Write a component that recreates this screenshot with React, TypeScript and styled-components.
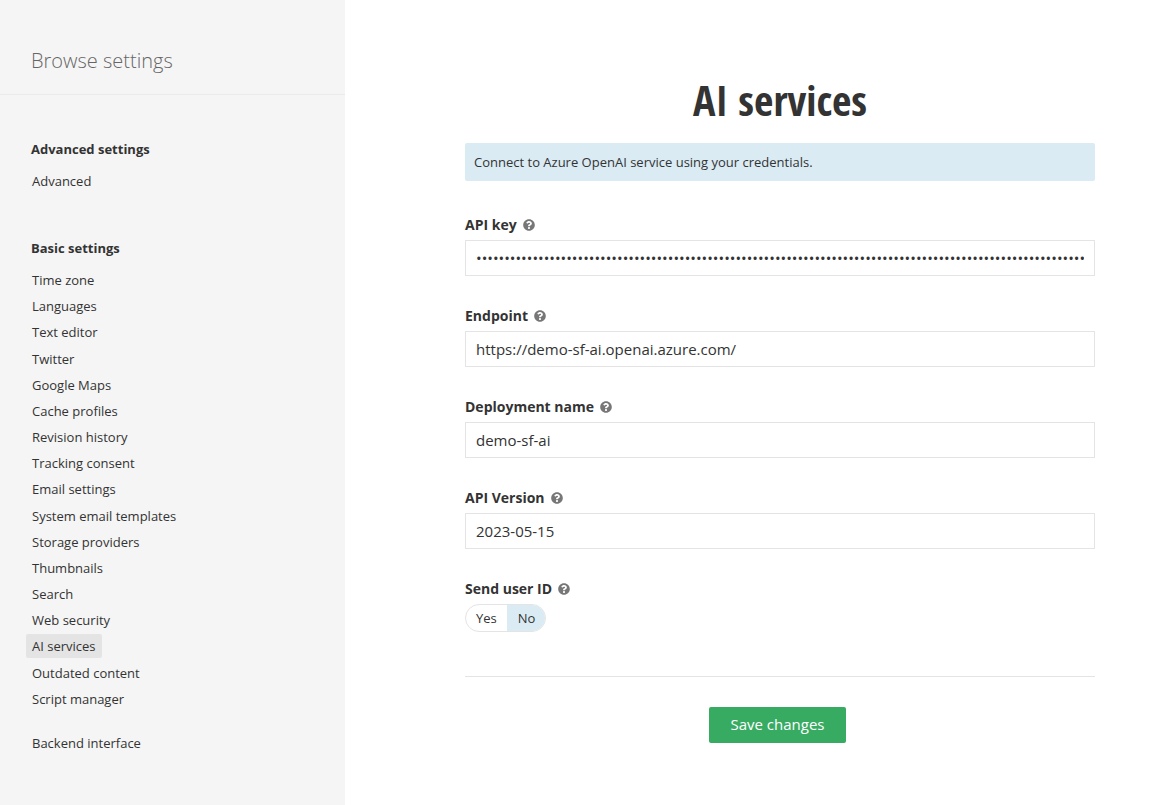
import React, { useState } from 'react';
import styled, { createGlobalStyle } from 'styled-components';
import { FaQuestionCircle } from 'react-icons/fa';

const GlobalStyle = createGlobalStyle`
  *, *::before, *::after { box-sizing: border-box; }
  body {
    margin: 0;
    background: #fff;
    color: #333;
    font: 13px/20px "Open Sans", "Noto Sans", sans-serif;
  }
`;

const Page = styled.div`
  display: flex;
  min-height: 100vh;
`;

const Sidebar = styled.aside`
  flex: 0 0 30%;
  background: #f5f5f5;
`;

const SidebarHeader = styled.header`
  padding: 46px 31px 18px;
  border-bottom: 1px solid #ebebeb;
`;

const SidebarTitle = styled.h2`
  margin: 0;
  font-size: 20px;
  line-height: 30px;
  font-weight: 300;
  color: #666;
`;

const Nav = styled.nav`
  padding: 44px 26px 40px;
`;

const NavHeading = styled.h3`
  margin: 0 0 10px;
  padding: 0 5px;
  font-size: 13px;
  line-height: 20px;
  font-weight: 700;
`;

const NavList = styled.ul<{ $height?: number; $after?: number }>`
  display: grid;
  grid-auto-rows: 1fr;
  height: ${(p) => (p.$height ? `${p.$height}px` : 'auto')};
  margin: 0 0 ${(p) => p.$after ?? 0}px;
  padding: 0;
  list-style: none;
`;

const NavLink = styled.a<{ $active?: boolean }>`
  display: inline-block;
  padding: 2px 6px;
  border-radius: 2px;
  background: ${(p) => (p.$active ? '#e4e4e4' : 'transparent')};
  color: #333;
  text-decoration: none;
`;

const Main = styled.main`
  flex: 1;
  min-width: 0;
  padding: 70px 55px 40px 120px;
`;

const Title = styled.h1`
  margin: 0 0 13px;
  font-family: "Open Sans Condensed", "Liberation Sans Narrow", "DejaVu Sans Condensed", sans-serif;
  font-size: 42px;
  line-height: 60px;
  font-weight: 700;
  text-align: center;
`;

const Notice = styled.p`
  margin: 0 0 34px;
  padding: 9px;
  border-radius: 2px;
  background: #daebf4;
`;

const Field = styled.div`
  margin-bottom: 30px;
`;

const FieldSet = styled.fieldset`
  margin: 0;
  padding: 0;
  border: 0;
`;

const LabelRow = styled.div`
  display: flex;
  align-items: center;
  gap: 6px;
  height: 25px;
  padding-bottom: 5px;
  font-size: 14px;
  font-weight: 700;
`;

const HelpButton = styled.button`
  display: flex;
  padding: 0;
  border: 0;
  background: none;
  color: #777;
  font-size: 12px;
`;

const TextInput = styled.input`
  display: block;
  width: 100%;
  height: 36px;
  padding: 0 10px;
  border: 1px solid #e4e4e4;
  border-radius: 0;
  background: #fff;
  color: #333;
  font: 15px "Open Sans", "Noto Sans", sans-serif;
`;

const Toggle = styled.div`
  display: inline-flex;
  height: 28px;
  border: 1px solid #e4e4e4;
  border-radius: 14px;
  overflow: hidden;
  vertical-align: top;
`;

const ToggleOption = styled.label`
  position: relative;
  padding: 0 10px;
  line-height: 26px;

  & + & { border-left: 1px solid #daebf4; }
  &:has(input:checked) { background: #daebf4; }
`;

const ToggleRadio = styled.input`
  position: absolute;
  inset: 0;
  margin: 0;
  opacity: 0;
`;

const Actions = styled.footer`
  display: flex;
  justify-content: center;
  margin-top: 44px;
  padding: 30px 5px 0 0;
  border-top: 1px solid #e4e4e4;
`;

const SaveButton = styled.button`
  height: 36px;
  padding: 0 21px 2px;
  border: 0;
  border-radius: 2px;
  background: #38ab63;
  color: #fff;
  font: 15px "Open Sans", "Noto Sans", sans-serif;
`;

const basicSettings = [
  'Time zone', 'Languages', 'Text editor', 'Twitter', 'Google Maps', 'Cache profiles',
  'Revision history', 'Tracking consent', 'Email settings', 'System email templates',
  'Storage providers', 'Thumbnails', 'Search', 'Web security', 'AI services',
  'Outdated content', 'Script manager',
];

const fields = [
  { id: 'api-key', label: 'API key', type: 'password', value: 'x'.repeat(108) },
  { id: 'endpoint', label: 'Endpoint', type: 'text', value: 'https://demo-sf-ai.openai.azure.com/' },
  { id: 'deployment', label: 'Deployment name', type: 'text', value: 'demo-sf-ai' },
  { id: 'api-version', label: 'API Version', type: 'text', value: '2023-05-15' },
];

function Help({ topic }: { topic: string }) {
  return (
    <HelpButton type="button" aria-label={`Help: ${topic}`}>
      <FaQuestionCircle />
    </HelpButton>
  );
}

export default function App() {
  const [sendUserId, setSendUserId] = useState('No');

  return (
    <>
      <GlobalStyle />
      <Page>
        <Sidebar>
          <SidebarHeader>
            <SidebarTitle>Browse settings</SidebarTitle>
          </SidebarHeader>
          <Nav>
            <NavHeading>Advanced settings</NavHeading>
            <NavList $after={45}>
              <li><NavLink href="#">Advanced</NavLink></li>
            </NavList>
            <NavHeading>Basic settings</NavHeading>
            <NavList $height={445} $after={18}>
              {basicSettings.map((name) => (
                <li key={name}>
                  <NavLink href="#" $active={name === 'AI services'}>{name}</NavLink>
                </li>
              ))}
            </NavList>
            <NavList>
              <li><NavLink href="#">Backend interface</NavLink></li>
            </NavList>
          </Nav>
        </Sidebar>
        <Main>
          <Title>AI services</Title>
          <Notice>Connect to Azure OpenAI service using your credentials.</Notice>
          <form onSubmit={(e) => e.preventDefault()}>
            {fields.map((f) => (
              <Field key={f.id}>
                <LabelRow>
                  <label htmlFor={f.id}>{f.label}</label>
                  <Help topic={f.label} />
                </LabelRow>
                <TextInput id={f.id} type={f.type} defaultValue={f.value} autoComplete="off" />
              </Field>
            ))}
            <FieldSet aria-labelledby="send-user-id">
              <LabelRow>
                <span id="send-user-id">Send user ID</span>
                <Help topic="Send user ID" />
              </LabelRow>
              <Toggle>
                {['Yes', 'No'].map((option) => (
                  <ToggleOption key={option}>
                    <ToggleRadio
                      type="radio"
                      name="send-user-id"
                      checked={sendUserId === option}
                      onChange={() => setSendUserId(option)}
                    />
                    {option}
                  </ToggleOption>
                ))}
              </Toggle>
            </FieldSet>
            <Actions>
              <SaveButton type="submit">Save changes</SaveButton>
            </Actions>
          </form>
        </Main>
      </Page>
    </>
  );
}
